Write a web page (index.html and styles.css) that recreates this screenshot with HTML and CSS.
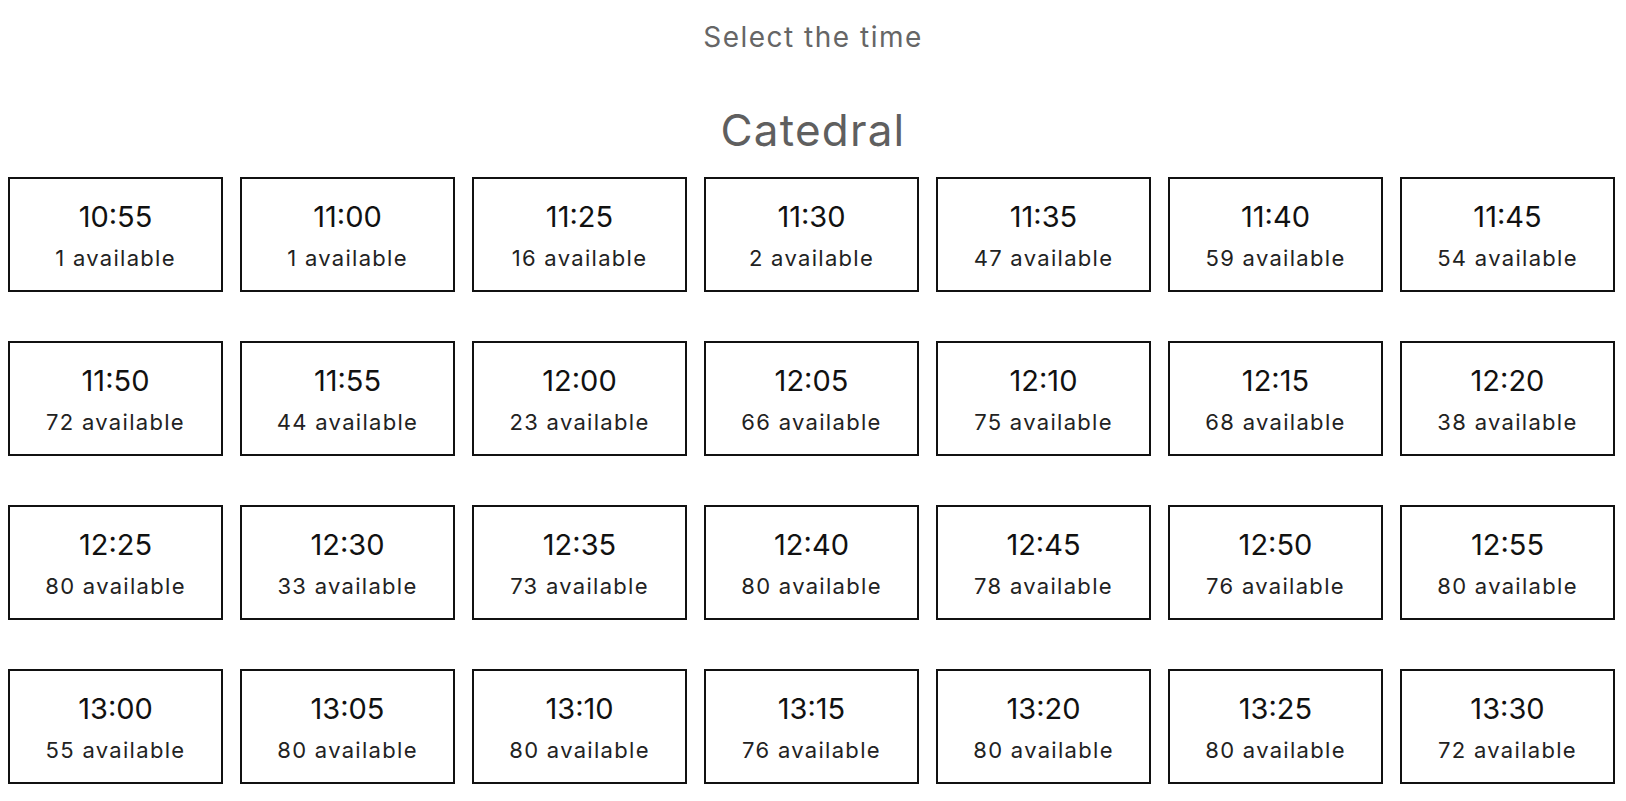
FILE: index.html
```html
<!DOCTYPE html>
<html>
<head>
<meta charset="utf-8">
<link rel="stylesheet" href="styles.css">
</head>
<body>
<div class="page">
  <div class="subtitle">Select the time</div>
  <h2 class="venue">Catedral</h2>
  <div class="slots">
    <div class="slot"><div class="time">10:55</div><div class="avail">1 available</div></div>
    <div class="slot"><div class="time">11:00</div><div class="avail">1 available</div></div>
    <div class="slot"><div class="time">11:25</div><div class="avail">16 available</div></div>
    <div class="slot"><div class="time">11:30</div><div class="avail">2 available</div></div>
    <div class="slot"><div class="time">11:35</div><div class="avail">47 available</div></div>
    <div class="slot"><div class="time">11:40</div><div class="avail">59 available</div></div>
    <div class="slot"><div class="time">11:45</div><div class="avail">54 available</div></div>
    <div class="slot"><div class="time">11:50</div><div class="avail">72 available</div></div>
    <div class="slot"><div class="time">11:55</div><div class="avail">44 available</div></div>
    <div class="slot"><div class="time">12:00</div><div class="avail">23 available</div></div>
    <div class="slot"><div class="time">12:05</div><div class="avail">66 available</div></div>
    <div class="slot"><div class="time">12:10</div><div class="avail">75 available</div></div>
    <div class="slot"><div class="time">12:15</div><div class="avail">68 available</div></div>
    <div class="slot"><div class="time">12:20</div><div class="avail">38 available</div></div>
    <div class="slot"><div class="time">12:25</div><div class="avail">80 available</div></div>
    <div class="slot"><div class="time">12:30</div><div class="avail">33 available</div></div>
    <div class="slot"><div class="time">12:35</div><div class="avail">73 available</div></div>
    <div class="slot"><div class="time">12:40</div><div class="avail">80 available</div></div>
    <div class="slot"><div class="time">12:45</div><div class="avail">78 available</div></div>
    <div class="slot"><div class="time">12:50</div><div class="avail">76 available</div></div>
    <div class="slot"><div class="time">12:55</div><div class="avail">80 available</div></div>
    <div class="slot"><div class="time">13:00</div><div class="avail">55 available</div></div>
    <div class="slot"><div class="time">13:05</div><div class="avail">80 available</div></div>
    <div class="slot"><div class="time">13:10</div><div class="avail">80 available</div></div>
    <div class="slot"><div class="time">13:15</div><div class="avail">76 available</div></div>
    <div class="slot"><div class="time">13:20</div><div class="avail">80 available</div></div>
    <div class="slot"><div class="time">13:25</div><div class="avail">80 available</div></div>
    <div class="slot"><div class="time">13:30</div><div class="avail">72 available</div></div>
  </div>
</div>
</body>
</html>
```

FILE: styles.css
```css
html, body {
  margin: 0;
  padding: 0;
  background: #ffffff;
}
body {
  padding: 0 8px;
  font-family: Inter, "Open Sans", sans-serif;
  overflow: hidden;
}
.page {
  display: flex;
  flex-direction: column;
  align-items: center;
}
.subtitle {
  margin-top: 20px;
  font-size: 28px;
  line-height: 34px;
  color: #666666;
  letter-spacing: 1.5px;
}
.venue {
  margin: 50px 0 0 0;
  font-size: 44px;
  line-height: 52px;
  font-weight: 400;
  color: #5f5f5f;
  letter-spacing: 1.2px;
}
.slots {
  margin-top: 21px;
  display: grid;
  grid-template-columns: repeat(7, 215px);
  column-gap: 17px;
  row-gap: 49px;
  align-self: flex-start;
}
.slot {
  box-sizing: border-box;
  height: 115px;
  border: 2px solid #111111;
  display: flex;
  flex-direction: column;
  align-items: center;
  padding-top: 20px;
  color: #111111;
}
.time {
  font-size: 29px;
  line-height: 36px;
}
.avail {
  margin-top: 10px;
  font-size: 22px;
  line-height: 26px;
  letter-spacing: 1.3px;
  color: #222222;
}
```
